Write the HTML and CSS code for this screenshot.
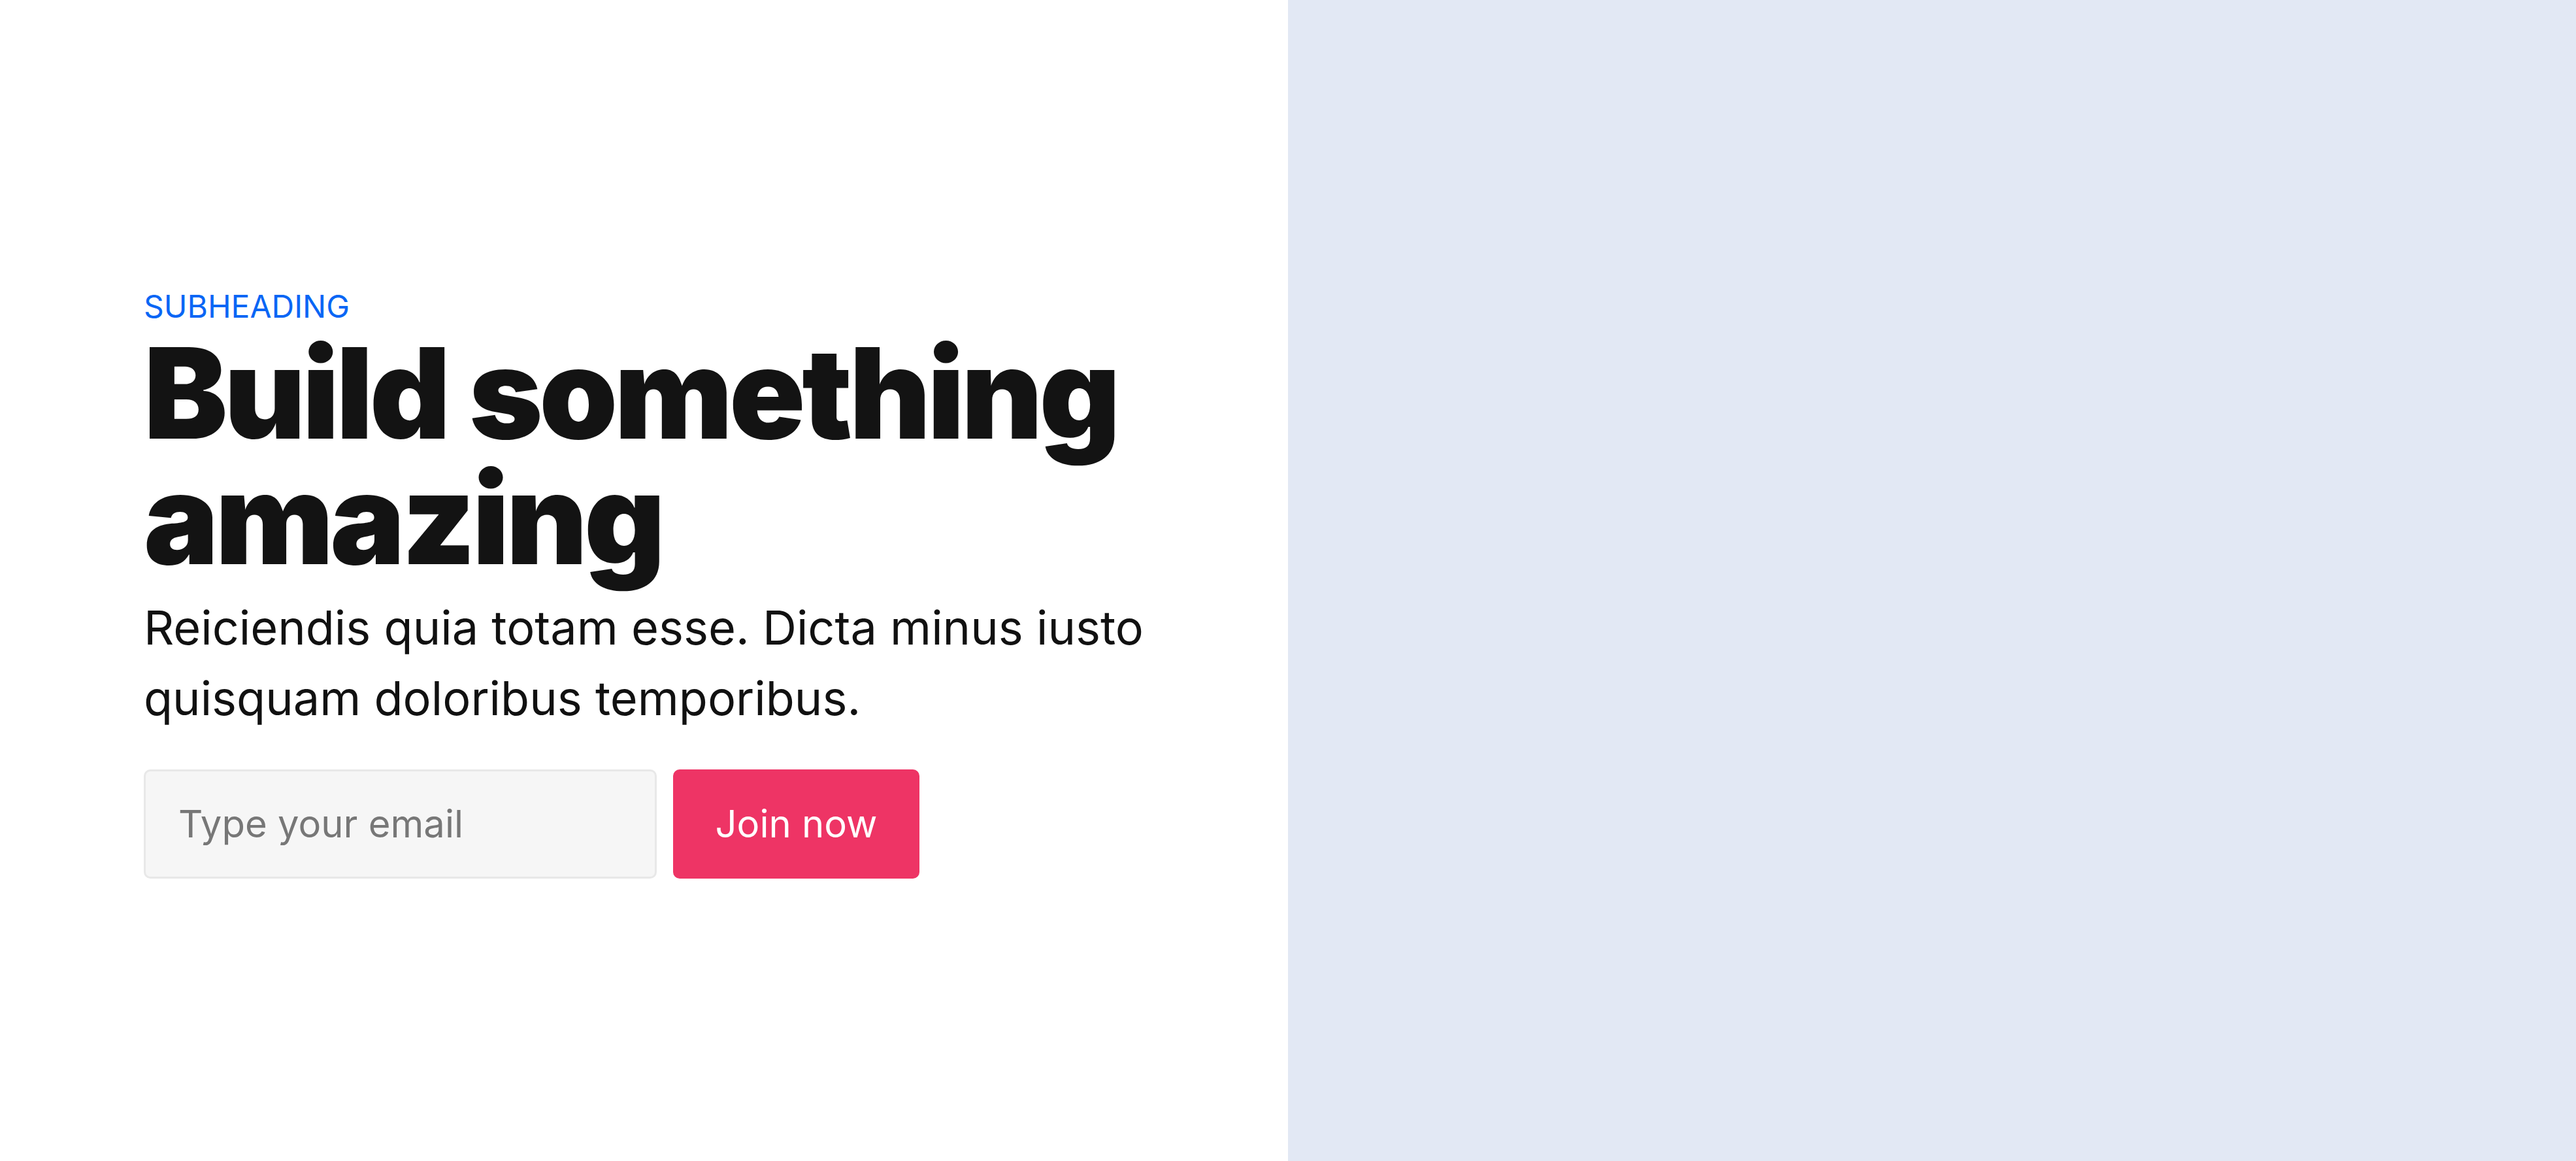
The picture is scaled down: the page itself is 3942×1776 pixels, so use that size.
FILE: index.html
```html
<!DOCTYPE html>
<html lang="en">
<head>
<meta charset="utf-8">
<title>Build something amazing</title>
<link rel="stylesheet" href="styles.css">
</head>
<body>
<main class="hero">
  <section class="hero-copy">
    <p class="eyebrow">SUBHEADING</p>
    <h1 class="title">Build something amazing</h1>
    <p class="lead">Reiciendis quia totam esse. Dicta minus iusto quisquam doloribus temporibus.</p>
    <form class="signup">
      <input class="email" type="email" placeholder="Type your email">
      <button class="join" type="button">Join now</button>
    </form>
  </section>
  <section class="hero-media"></section>
</main>
</body>
</html>
```

FILE: styles.css
```css
html, body {
  margin: 0;
  padding: 0;
  height: 100%;
}
body {
  font-family: "Inter", "Liberation Sans", sans-serif;
  color: #111;
  background: #fff;
}
.hero {
  display: grid;
  grid-template-columns: 1fr 1fr;
  height: 100vh;
}
.hero-copy {
  display: flex;
  flex-direction: column;
  justify-content: center;
  padding-left: 220px;
  padding-right: 80px;
}
.hero-media {
  background: #e2e8f4;
}
.eyebrow {
  margin: 0;
  font-size: 48px;
  line-height: 1.5;
  color: #0a66f5;
}
.title {
  margin: 0;
  font-size: 192px;
  line-height: 1;
  font-weight: 900;
  letter-spacing: -0.027em;
  color: #131313;
}
.lead {
  margin: 17px 0 0;
  font-size: 72px;
  line-height: 1.5;
  color: #111;
}
.signup {
  display: flex;
  gap: 25px;
  margin-top: 55px;
}
.email {
  box-sizing: border-box;
  width: 785px;
  height: 167px;
  padding: 0 50px;
  border: 3px solid #e8e8e8;
  border-radius: 10px;
  background: #f6f6f6;
  font-family: inherit;
  font-size: 58px;
  color: #111;
}
.email::placeholder {
  color: #777;
}
.join {
  box-sizing: border-box;
  width: 377px;
  height: 167px;
  padding: 0;
  border: 0;
  border-radius: 10px;
  background: #ee3465;
  color: #fff;
  font-family: inherit;
  font-size: 58px;
}
```
